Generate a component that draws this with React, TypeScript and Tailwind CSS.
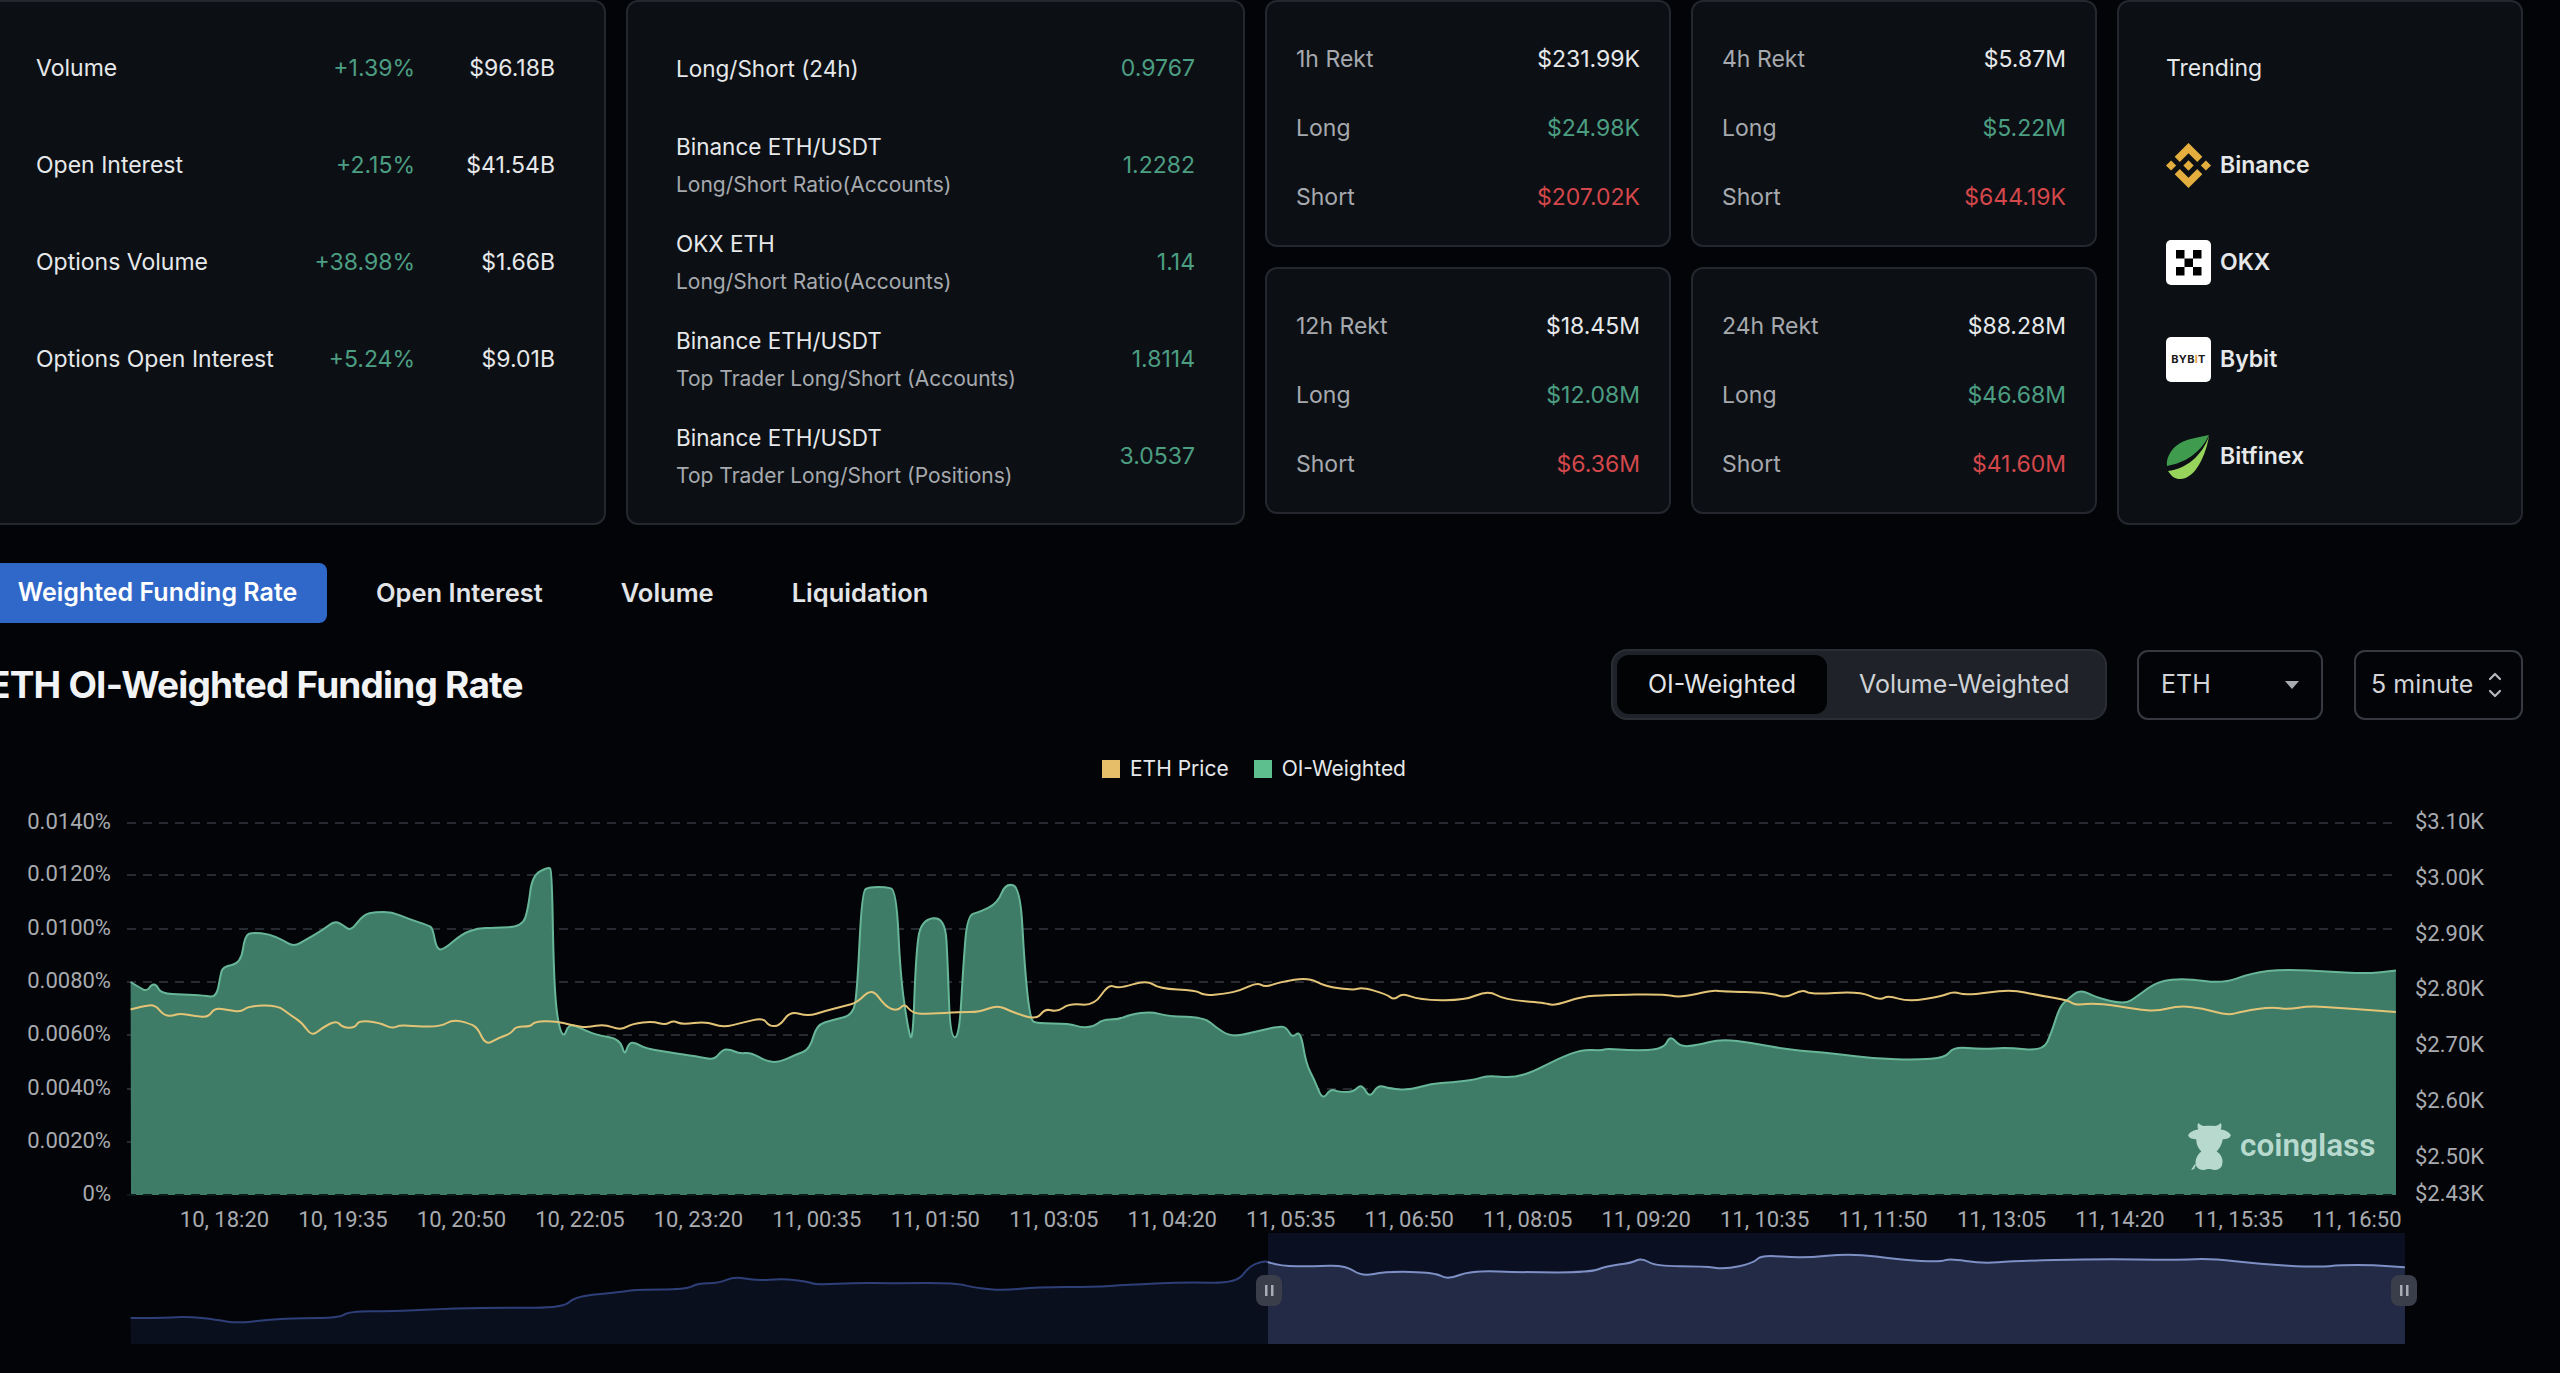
// Traced chart points, in a 1.225 x 1.9286 stretched copy of the screenshot
const toXY = (trace: number[][]) => trace.map(([x, y]) => [x / 1.225, 560 + y / 1.9286]);

// Rounded line through the traced points, corners get softened by the midpoints
const smoothPath = (trace: number[][]) => {
  const pts = toXY(trace);
  let d = `M${pts[0][0].toFixed(1)} ${pts[0][1].toFixed(1)}`;
  for (let i = 1; i < pts.length - 1; i++) {
    const mx = (pts[i][0] + pts[i + 1][0]) / 2;
    const my = (pts[i][1] + pts[i + 1][1]) / 2;
    d += `Q${pts[i][0].toFixed(1)} ${pts[i][1].toFixed(1)} ${mx.toFixed(1)} ${my.toFixed(1)}`;
  }
  const last = pts[pts.length - 1];
  return d + `L${last[0].toFixed(1)} ${last[1].toFixed(1)}`;
};

const R = 1568; // right half of the trace starts here

const shift = (pts: number[][]) => pts.map(([x, y]) => [x + R, y]);

const areaTrace = [
  [160,812],[170,822],[180,830],[186,816],[192,818],[197,834],[225,836],[250,838],[265,842],[270,800],[273,782],[295,776],[300,722],[310,716],[330,720],[345,730],[360,744],[375,730],[395,712],[410,694],[420,702],[430,714],[445,682],[460,677],[480,677],[500,690],[525,703],[530,708],[535,750],[545,748],[565,720],[585,708],[605,708],[640,705],[647,670],[652,606],[672,590],[676,596],[678,780],[682,880],[690,922],[697,892],[710,900],[730,914],[760,922],[765,955],[770,930],[778,928],[790,940],[830,950],[860,957],[875,962],[885,942],[895,942],[905,950],[920,948],[940,966],[955,966],[975,952],[992,942],[1000,895],[1020,885],[1045,876],[1050,830],[1056,636],[1065,629],[1085,629],[1098,634],[1103,800],[1112,900],[1118,932],[1122,760],[1128,692],[1158,686],[1161,780],[1164,917],[1175,920],[1180,780],[1185,683],[1200,677],[1222,660],[1232,621],[1250,630],[1255,780],[1262,885],[1270,892],[1310,892],[1325,900],[1340,898],[1350,885],[1370,884],[1385,875],[1410,869],[1430,878],[1475,880],[1490,900],[1505,915],[1520,915],[1545,905],
  ...shift([[0,897],[8,900],[15,920],[25,905],[32,970],[42,1000],[52,1040],[62,1018],[72,1024],[90,1024],[100,1008],[110,1036],[120,1010],[135,1018],[160,1020],[185,1008],[210,1006],[240,1000],[255,992],[285,997],[310,985],[340,960],[370,942],[395,944],[400,940],[430,944],[470,942],[478,914],[490,937],[510,934],[540,922],[580,930],[620,942],[680,950],[730,960],[780,962],[815,958],[825,937],[860,942],[890,938],[935,945],[945,910],[955,860],[965,845],[980,826],[1000,842],[1035,855],[1050,840],[1075,810],[1110,805],[1155,815],[1190,795],[1230,787],[1290,792],[1330,796],[1367,790]]),
];

const priceTrace = [
  [160,865],[175,858],[190,856],[200,875],[210,878],[220,872],[240,878],[255,880],[263,862],[280,866],[295,870],[305,858],[340,857],[355,875],[370,890],[382,917],[395,900],[412,886],[420,900],[435,900],[440,886],[465,890],[480,902],[490,895],[510,898],[540,898],[555,884],[575,892],[585,900],[595,934],[610,920],[625,912],[632,898],[650,898],[655,888],[680,887],[700,895],[720,900],[740,893],[760,905],[775,892],[800,888],[815,895],[825,886],[835,894],[865,888],[885,900],[910,890],[935,881],[942,897],[955,897],[968,868],[990,878],[1010,868],[1035,858],[1050,852],[1068,823],[1085,860],[1100,868],[1108,853],[1118,873],[1140,873],[1175,870],[1200,870],[1222,856],[1240,870],[1270,885],[1280,863],[1295,870],[1310,853],[1340,858],[1358,816],[1370,825],[1405,808],[1420,825],[1465,828],[1475,838],[1500,835],[1520,828],[1540,813],[1550,822],
  ...shift([[0,812],[35,803],[55,820],[90,828],[100,822],[130,835],[140,847],[150,833],[170,846],[225,848],[255,828],[275,846],[325,852],[335,858],[370,840],[400,837],[470,835],[490,842],[530,828],[540,830],[600,833],[620,843],[640,826],[650,836],[710,830],[735,847],[745,838],[770,850],[810,840],[825,830],[840,838],[895,826],[930,838],[965,847],[975,857],[1000,852],[1050,865],[1075,868],[1100,858],[1130,862],[1160,877],[1180,868],[1215,860],[1235,865],[1260,858],[1300,862],[1350,868],[1367,870]]),
];

const miniLeft = [
  [160,1460],[200,1460],[230,1457],[265,1463],[290,1470],[330,1463],[370,1460],[415,1460],[428,1447],[480,1447],[560,1441],[620,1440],[690,1440],[705,1418],[760,1410],[780,1405],[840,1405],[855,1393],[880,1393],[900,1380],[925,1388],[960,1384],[990,1390],[1000,1396],[1050,1392],[1090,1393],[1170,1392],[1195,1402],[1230,1407],[1270,1400],[1340,1400],[1380,1396],[1450,1391],[1515,1393],[1530,1360],[1548,1350],[1553,1352],
];

const miniRight = [
  [1553,1352],
  ...shift([[0,1360],[40,1360],[80,1358],[100,1380],[130,1370],[190,1372],[205,1386],[235,1368],[300,1372],[380,1372],[400,1360],[430,1354],[443,1344],[460,1360],[520,1360],[545,1366],[580,1354],[590,1338],[640,1345],[700,1335],[760,1348],[810,1352],[820,1345],[860,1355],[900,1350],[1000,1346],[1100,1348],[1140,1345],[1200,1356],[1270,1362],[1300,1358],[1340,1358],[1378,1362]]),
];

const leftAxis = [
  ['0.0140%', 822], ['0.0120%', 874], ['0.0100%', 928], ['0.0080%', 981],
  ['0.0060%', 1034], ['0.0040%', 1088], ['0.0020%', 1141], ['0%', 1194],
] as const;

const rightAxis = [
  ['$3.10K', 822], ['$3.00K', 878], ['$2.90K', 934], ['$2.80K', 989],
  ['$2.70K', 1045], ['$2.60K', 1101], ['$2.50K', 1157], ['$2.43K', 1194],
] as const;

const timeAxis = [
  '10, 18:20', '10, 19:35', '10, 20:50', '10, 22:05', '10, 23:20', '11, 00:35', '11, 01:50',
  '11, 03:05', '11, 04:20', '11, 05:35', '11, 06:50', '11, 08:05', '11, 09:20', '11, 10:35',
  '11, 11:50', '11, 13:05', '11, 14:20', '11, 15:35', '11, 16:50',
];

const cardClass = 'rounded-[12px] border-2 border-[#24272d] bg-[#0c1015]';

function MarketRow({ label, change, value }: { label: string; change: string; value: string }) {
  return (
    <div className="flex h-[97px] items-center">
      <span className="flex-1 text-[#e6e8ea]">{label}</span>
      <span className="text-[#4c9e82]">{change}</span>
      <span className="w-[140px] text-right text-[#e6e8ea]">{value}</span>
    </div>
  );
}

function RatioRow({ title, sub, value }: { title: string; sub?: string; value: string }) {
  return (
    <div className="flex h-[97px] items-center justify-between">
      <div className="flex flex-col gap-[11px]">
        <span className="text-[22.5px] leading-[27px] text-[#e6e8ea]">{title}</span>
        {sub && <span className="text-[21px] leading-[27px] text-[#a6a9ae]">{sub}</span>}
      </div>
      <span className="text-[#4c9e82]">{value}</span>
    </div>
  );
}

function RektCard({ label, total, long, short }: { label: string; total: string; long: string; short: string }) {
  return (
    <div className={`${cardClass} h-[247px] px-[29px] pt-[22.5px]`}>
      <div className="flex h-[69px] items-center justify-between">
        <span className="text-[#a6a9ae]">{label}</span>
        <span className="text-[#e6e8ea]">{total}</span>
      </div>
      <div className="flex h-[69px] items-center justify-between">
        <span className="text-[#a6a9ae]">Long</span>
        <span className="text-[#4c9e82]">{long}</span>
      </div>
      <div className="flex h-[69px] items-center justify-between">
        <span className="text-[#a6a9ae]">Short</span>
        <span className="text-[#d4474b]">{short}</span>
      </div>
    </div>
  );
}

function BinanceLogo() {
  return (
    <svg viewBox="0 0 126.61 126.61" className="h-[45px] w-[45px]" fill="#e3ae3e">
      <path d="M38.73 53.2l24.59-24.58 24.6 24.6 14.3-14.31L63.32 0 24.43 38.89z" />
      <path d="M0 63.31l14.3-14.31 14.31 14.31-14.31 14.3z" />
      <path d="M38.73 73.41l24.59 24.59 24.6-24.6 14.31 14.29-38.9 38.91-38.91-38.88-.02-.02z" />
      <path d="M98 63.31l14.3-14.31 14.31 14.3-14.31 14.32z" />
      <path d="M77.83 63.3L63.32 48.78 52.59 59.51l-1.24 1.23-2.54 2.54 14.51 14.5 14.51-14.47z" />
    </svg>
  );
}

function OkxLogo() {
  return (
    <svg viewBox="0 0 45 45" className="h-[45px] w-[45px]">
      <rect width="45" height="45" rx="5" fill="#fff" />
      <g fill="#000">
        <rect x="10" y="10" width="8.5" height="8.5" />
        <rect x="27" y="10" width="8.5" height="8.5" />
        <rect x="18.5" y="18.5" width="8.5" height="8.5" />
        <rect x="10" y="27" width="8.5" height="8.5" />
        <rect x="27" y="27" width="8.5" height="8.5" />
      </g>
    </svg>
  );
}

function BybitLogo() {
  return (
    <div className="flex h-[45px] w-[45px] items-center justify-center rounded-[5px] bg-white text-[11px] font-bold tracking-[0.3px] text-[#1a1a1a]">
      BYB<span className="text-[#e9a33b]">I</span>T
    </div>
  );
}

function BitfinexLogo() {
  return (
    <svg viewBox="0 0 45 45" className="h-[45px] w-[45px]">
      <path d="M43 1C30 4 18 5 10 12 3 18 0 26 1 32 18 29 34 20 43 1Z" fill="#3f9c4e" />
      <path d="M43 2C40 20 30 45 14 45 9 45 6 43 2 37 20 35 36 22 43 2Z" fill="#97d45c" />
    </svg>
  );
}

function UpDownIcon() {
  return (
    <svg viewBox="0 0 14 26" className="h-[26px] w-[14px]" fill="none" stroke="#b5b8bc" strokeWidth="2.2" strokeLinecap="round" strokeLinejoin="round">
      <path d="M2 7l5-5 5 5" />
      <path d="M2 19l5 5 5-5" />
    </svg>
  );
}

function CoinglassMark() {
  return (
    <svg x="2188" y="1121" width="43" height="49" viewBox="0 0 42 48" fill="#b7d9ce">
      <path d="M0 13C2 9 6 8 10 7 9 5 9 3 10 1 12 3 14 4 16 4 19 3.500 23 3.500 26 4 28 4 30 3 32 1 33 3 33 5 32 7 36 8 40 9 42 13 41 16 37 17 34 17 33 22 31 26 28 29 33 32 35 38 33 43 31 47 26 48 22 46L19 46C15 48 10 47 8 43 6 38 9 32 13 29 10 26 8 22 8 17 5 17 1 16 0 13Z" />
      <path d="M8 41L6 46 3 47 6 42Z" />
    </svg>
  );
}

function SliderHandle({ x }: { x: number }) {
  return (
    <g>
      <rect x={x - 13} y="1274" width="26" height="31" rx="8" fill="#3a3e4b" />
      <rect x={x - 4} y="1284" width="2.5" height="11" fill="#a9acb4" />
      <rect x={x + 2} y="1284" width="2.5" height="11" fill="#a9acb4" />
    </g>
  );
}

function FundingChart() {
  const area = smoothPath(areaTrace);
  const miniA = smoothPath(miniLeft);
  const miniB = smoothPath(miniRight);

  return (
    <svg viewBox="0 778 2560 595" className="block h-[595px] w-[2560px]" fontFamily="Roboto, sans-serif" fontSize="22">
      {leftAxis.slice(0, 7).map(([, y]) => (
        <line key={y} x1="127" x2="2397" y1={y} y2={y} stroke="#272a30" strokeWidth="2" strokeDasharray="9 7" />
      ))}

      <path d={`${area}L2396 1194L131 1194Z`} fill="#3e7c68" />
      <path d={area} fill="none" stroke="#68b698" strokeWidth="2" strokeLinejoin="round" />
      <path d={smoothPath(priceTrace)} fill="none" stroke="#e3c477" strokeWidth="2" strokeLinejoin="round" />
      <line x1="127" x2="2397" y1="1194" y2="1194" stroke="#0b1a18" strokeWidth="2" strokeDasharray="9 7" />

      <CoinglassMark />
      <text x="2240" y="1155" fontWeight="600" fontSize="31.5" fill="#b7d9ce">coinglass</text>

      {leftAxis.map(([label, y]) => (
        <text key={label} x="111" y={y + 6} textAnchor="end" fill="#a8abb0">{label}</text>
      ))}
      {rightAxis.map(([label, y]) => (
        <text key={label} x="2415" y={y + 6} fill="#a8abb0">{label}</text>
      ))}
      {timeAxis.map((label, i) => (
        <text key={label} x={224.5 + i * 118.47} y="1226" textAnchor="middle" fill="#a8abb0">{label}</text>
      ))}

      <rect x="1268" y="1232" width="1137" height="111" fill="#0a1022" />
      <path d={`${miniA}L1268 1343L131 1343Z`} fill="#0a0f1e" />
      <path d={`${miniB}L2405 1343L1268 1343Z`} fill="#222a45" />
      <path d={miniA} fill="none" stroke="#2e3f78" strokeWidth="2" />
      <path d={miniB} fill="none" stroke="#7d8fc4" strokeWidth="2" />
      <SliderHandle x={1269} />
      <SliderHandle x={2404} />
    </svg>
  );
}

export default function App() {
  return (
    <div className="h-[1373px] w-[2560px] overflow-hidden bg-[#030408] font-['Inter',sans-serif] text-[23px]">
      <div className="ml-[-12px] w-[2535px]">
        {/* stat cards */}
        <div className="flex h-[525px] items-start gap-[20px]">
          <div className={`${cardClass} h-[525px] w-[618px] pl-[46px] pr-[49px] pt-[18px]`}>
            <MarketRow label="Volume" change="+1.39%" value="$96.18B" />
            <MarketRow label="Open Interest" change="+2.15%" value="$41.54B" />
            <MarketRow label="Options Volume" change="+38.98%" value="$1.66B" />
            <MarketRow label="Options Open Interest" change="+5.24%" value="$9.01B" />
          </div>

          <div className={`${cardClass} h-[525px] w-[619px] pl-[48px] pr-[48px] pt-[18px]`}>
            <RatioRow title="Long/Short (24h)" value="0.9767" />
            <RatioRow title="Binance ETH/USDT" sub="Long/Short Ratio(Accounts)" value="1.2282" />
            <RatioRow title="OKX ETH" sub="Long/Short Ratio(Accounts)" value="1.14" />
            <RatioRow title="Binance ETH/USDT" sub="Top Trader Long/Short (Accounts)" value="1.8114" />
            <RatioRow title="Binance ETH/USDT" sub="Top Trader Long/Short (Positions)" value="3.0537" />
          </div>

          <div className="grid w-[832px] grid-cols-2 gap-[20px]">
            <RektCard label="1h Rekt" total="$231.99K" long="$24.98K" short="$207.02K" />
            <RektCard label="4h Rekt" total="$5.87M" long="$5.22M" short="$644.19K" />
            <RektCard label="12h Rekt" total="$18.45M" long="$12.08M" short="$6.36M" />
            <RektCard label="24h Rekt" total="$88.28M" long="$46.68M" short="$41.60M" />
          </div>

          <div className={`${cardClass} h-[525px] w-[406px] pl-[47px] pt-[18px]`}>
            <div className="flex h-[97px] items-center text-[#e6e8ea]">Trending</div>
            {[
              { name: 'Binance', logo: <BinanceLogo /> },
              { name: 'OKX', logo: <OkxLogo /> },
              { name: 'Bybit', logo: <BybitLogo /> },
              { name: 'Bitfinex', logo: <BitfinexLogo /> },
            ].map(item => (
              <div key={item.name} className="flex h-[97px] items-center gap-[9px] font-semibold text-[#e6e8ea]">
                {item.logo}
                {item.name}
              </div>
            ))}
          </div>
        </div>

        {/* tabs */}
        <div className="mt-[38px] flex h-[60px] items-center text-[25.5px] font-semibold text-[#e2e4e7]">
          <div className="flex h-[60px] w-[339px] items-center justify-center rounded-[8px] bg-[#2f68c8] text-[25px] text-white">Weighted Funding Rate</div>
          <div className="ml-[49px]">Open Interest</div>
          <div className="ml-[78px]">Volume</div>
          <div className="ml-[78px]">Liquidation</div>
        </div>

        {/* title + controls */}
        <div className="mt-[26px] flex h-[71px] items-center">
          <h1 className="flex-1 text-[37px] font-bold tracking-[-0.8px] text-[#f2f3f4]">ETH OI-Weighted Funding Rate</h1>
          <div className="flex h-[71px] w-[496px] items-center rounded-[16px] border-2 border-[#2a2e34] bg-[#1f2329] pl-[4px] text-[25px] text-[#cfd2d6]">
            <div className="flex h-[59px] w-[210px] items-center justify-center rounded-[12px] bg-[#020304] text-[#e2e4e7]">OI-Weighted</div>
            <div className="ml-[32px]">Volume-Weighted</div>
          </div>
          <div className="ml-[30px] flex h-[70px] w-[186px] items-center justify-between rounded-[11px] border-2 border-[#363a40] px-[22px] text-[25px] text-[#d2d4d8]">
            ETH
            <svg viewBox="0 0 14 8" className="h-[8px] w-[14px]"><path d="M0 0h14L7 8z" fill="#a8abb0" /></svg>
          </div>
          <div className="ml-[31px] flex h-[70px] w-[169px] items-center justify-between rounded-[11px] border-2 border-[#363a40] pl-[15px] pr-[19px] text-[25px] text-[#d2d4d8]">
            5 minute
            <UpDownIcon />
          </div>
        </div>

        {/* legend */}
        <div className="mt-[40px] flex h-[18px] items-center pl-[1114px] text-[21px] text-[#e6e8ea]">
          <span className="h-[18px] w-[18px] bg-[#e6bd68]" />
          <span className="ml-[10px]">ETH Price</span>
          <span className="ml-[25px] h-[18px] w-[18px] bg-[#5dbe8e]" />
          <span className="ml-[10px]">OI-Weighted</span>
        </div>
      </div>

      <div className="mt-[1px]">
        <FundingChart />
      </div>
    </div>
  );
}
